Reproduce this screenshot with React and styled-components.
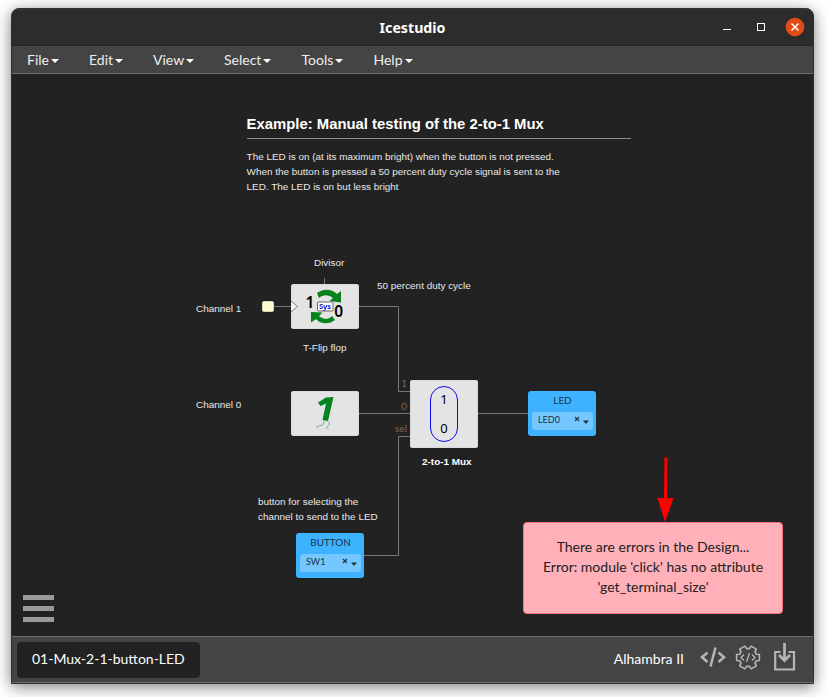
import React from 'react';
import styled, { createGlobalStyle } from 'styled-components';

const GlobalStyle = createGlobalStyle`
  * { box-sizing: border-box; }
  html, body { margin: 0; background: #fff; overflow: hidden; }
`;

const Desktop = styled.div`
  width: 827px;
  height: 697px;
  padding: 8px 13px 13px 11px;
  background: #fff;
  overflow: hidden;
  font-family: Lato, sans-serif;
`;

const Window = styled.div`
  display: flex;
  flex-direction: column;
  width: 803px;
  height: 676px;
  border: 1px solid #303030;
  border-radius: 8px 8px 0 0;
  background: #222;
  box-shadow: 0 3px 15px rgba(0, 0, 0, 0.52);
  overflow: hidden;
`;

const TitleBar = styled.header`
  display: grid;
  grid-template-columns: 1fr auto 1fr;
  align-items: center;
  flex: none;
  height: 37px;
  background: #2c2c2c;
  box-shadow: inset 0 1px #383838, inset 0 -1px #242424;
`;

const Title = styled.h1`
  grid-column: 2;
  margin: 0;
  color: #fff;
  font: 700 14.2px/20px 'Noto Sans', sans-serif;
`;

const WindowControls = styled.div`
  display: flex;
  align-items: center;
  justify-content: flex-end;
  padding: 0 8px 1px 0;

  svg { display: block; }
`;

const MenuBar = styled.nav`
  display: flex;
  flex: none;
  align-items: center;
  height: 28px;
  padding-left: 15px;
  border-bottom: 1px solid #6b6b6b;
  background: #444;
`;

const MenuItem = styled.div`
  display: flex;
  align-items: center;
  width: ${(p) => p.$width}px;
  color: #eee;
  font-size: 14px;
  line-height: 20px;
`;

const Caret = styled.span`
  margin: 2px 0 0 2px;
  border: 4.3px solid transparent;
  border-width: 4px 4.3px 0;
  border-top-color: #fff;
`;

const Canvas = styled.main`
  position: relative;
  display: flex;
  align-items: flex-end;
  justify-content: space-between;
  flex: 1;
  padding: 0 30px 22px 11px;
  background: #222;
  overflow: hidden;
`;

const Wires = styled.svg`
  position: absolute;
  inset: 0;
  width: 801px;
  height: 562px;
`;

const Note = styled.div`
  position: absolute;
  left: ${(p) => p.$x}px;
  top: ${(p) => p.$y}px;
  color: ${(p) => (p.$bold ? '#fff' : '#e8e8e8')};
  font: ${(p) => (p.$bold ? 700 : 400)} 9.93px/15px 'Liberation Sans', Arial, sans-serif;
  white-space: pre;
`;

const Intro = styled(Note)`
  width: 384px;

  h2 {
    margin: 0 0 10px;
    height: 25px;
    border-bottom: 1px solid #8f8f8f;
    color: #fff;
    font-size: 14.86px;
    line-height: 20px;
  }
`;

const Block = styled.div`
  position: absolute;
  left: ${(p) => p.$x}px;
  top: ${(p) => p.$y}px;
  width: 68px;
  height: ${(p) => p.$height || 45}px;
  border-radius: 3px;
  background: #e4e4e4;
  box-shadow: inset 0 0 0 1px #dadada;

  svg { display: block; }
`;

// Port names hang off the left edge of their block.
const PortNames = styled.div`
  position: absolute;
  right: 71px;
  top: -3px;
  display: grid;
  gap: 10.5px;
  color: #80685c;
  font-size: 10px;
  line-height: 12px;
  text-align: right;
`;

const PinBlock = styled(Block)`
  padding: 4px 3px 6px 4px;
  background: #3db2ff;
  box-shadow: none;
  color: #1d3343;
`;

const PinName = styled.div`
  height: 17px;
  font-size: 9.9px;
  line-height: 11px;
  text-align: center;
`;

const PinSelect = styled.div`
  display: flex;
  align-items: center;
  height: 18px;
  padding: 0 4.5px 3px 6px;
  border-radius: 3px;
  background: #75c8ff;
  font-size: 9px;

  span { flex: 1; }
`;

const ClockPort = styled.div`
  position: absolute;
  left: 250px;
  top: 227px;
  width: 12px;
  height: 11px;
  border: 1px solid #dcd8b4;
  border-radius: 2px;
  background: #fffbd0;
`;

const MenuToggle = styled.div`
  display: grid;
  gap: 6px;
  margin-bottom: -8px;

  span {
    width: 31px;
    height: 5px;
    background: #999;
  }
`;

const ErrorToast = styled.div`
  width: 260px;
  height: 92px;
  padding: 14px 10px;
  border: 1px solid #ff6f7a;
  border-radius: 4px;
  background: #ffb0b8;
  color: #222;
  font-size: 14px;
  line-height: 20px;
  text-align: center;
`;

const Footer = styled.footer`
  display: flex;
  flex: none;
  align-items: center;
  height: 47px;
  padding: 0 17px 0 5px;
  border-top: 1px solid #6b6b6b;
  border-bottom: 1px solid #6b6b6b;
  background: #444;
  color: #fff;
  font-size: 14px;
`;

const ProjectTab = styled.div`
  width: 183px;
  height: 36px;
  margin-right: auto;
  padding-left: 15px;
  border-radius: 4px;
  background: #222;
  line-height: 33px;
`;

const BoardName = styled.span`
  margin-right: 16px;
  padding-bottom: 2px;
`;

const Tools = styled.svg`
  display: block;
  width: 96px;
  height: 34px;
`;

const MENUS = [
  ['File', 62],
  ['Edit', 64],
  ['View', 71],
  ['Select', 77.5],
  ['Tools', 72],
  ['Help', 60],
];

// Outline of a six-toothed gear; one tooth per 60 degrees.
const GEAR_POINTS = Array.from({ length: 6 }, (_, i) =>
  [[-15, 11.8], [15, 11.8], [21, 9], [39, 9]].map(([offset, radius]) => {
    const angle = ((i * 60 + offset) * Math.PI) / 180;
    return `${(48 + radius * Math.cos(angle)).toFixed(2)},${(14.5 + radius * Math.sin(angle)).toFixed(2)}`;
  }).join(' ')
).join(' ');

function Pin({ x, y, name, value }) {
  return (
    <PinBlock $x={x} $y={y}>
      <PinName>{name}</PinName>
      <PinSelect>
        <span>{value}</span>
        <svg width="15" height="9" viewBox="0 0 15 9">
          <path d="M1 2l4 4M5 2l-4 4" stroke="#1d3343" strokeWidth="1.1" />
          <path d="M9 5.500h6l-3 3.500z" fill="#1d3343" />
        </svg>
      </PinSelect>
    </PinBlock>
  );
}

// A rotating pair of arrows around the system clock tag.
function FlipFlopArt() {
  return (
    <svg width="68" height="45" viewBox="0 0 68 45" fontFamily="Noto Sans, sans-serif">
      <path d="M0 17l6.5 5.5-6.5 5.5" fill="#f2f2f2" stroke="#666" strokeWidth=".8" />
      <g fill="#04831f">
        <path d="M26 9C31 5 40 4 46 10L50 7V18.500L38.500 17L42 14C38 10.500 32 10 28 14Z" />
        <path d="M44 36C39 40 30 41 25 35L20 38.500V28L31.500 28.500L28 32C32 35.500 37 36 41 32Z" />
      </g>
      <text x="14.500" y="24" fontSize="15.500" fontWeight="600">1</text>
      <text x="43.300" y="33" fontSize="15.500" fontWeight="600">0</text>
      <rect x="26.500" y="18" width="15.500" height="9" rx="1" fill="#fff" stroke="#444" strokeWidth=".8" />
      <text x="28" y="25" fontSize="7" fontWeight="700" fill="#1414e6" textLength="12" lengthAdjust="spacingAndGlyphs">Sys</text>
    </svg>
  );
}

function RunningOneArt() {
  return (
    <svg width="68" height="45" viewBox="0 0 68 45" fill="none">
      <path d="M35 6.500L42.500 6L37 30L31.500 29L35 12.500L29.500 15L27 11.500Z" fill="#04831f" />
      <path d="M34 29L31.500 34L25.500 35.500L27 37.500M36 29.500L39 33L35.500 36.500L37.500 39" stroke="#6cae77" strokeWidth=".9" />
    </svg>
  );
}

function MuxArt() {
  return (
    <svg width="68" height="68" viewBox="0 0 68 68" fontFamily="Noto Sans, sans-serif" fontSize="13" textAnchor="middle">
      <rect x="20.500" y="6.500" width="27" height="55" rx="13.500" fill="none" stroke="#0a0af0" strokeWidth="1" />
      <text x="34" y="24">1</text>
      <text x="34" y="53">0</text>
    </svg>
  );
}

export default function App() {
  return (
    <>
      <GlobalStyle />
      <Desktop>
        <Window>
          <TitleBar>
            <Title>Icestudio</Title>
            <WindowControls>
              <svg width="63" height="20" viewBox="0 0 63 20" fill="none" stroke="#fff">
                <path d="M1 12.500h8" />
                <rect x="35.500" y="6.500" width="7" height="7" />
              </svg>
              <svg width="20" height="20" viewBox="0 0 20 20">
                <circle cx="10" cy="10" r="9.300" fill="#e34a17" />
                <path d="M6.500 6.500l7 7M13.500 6.500l-7 7" stroke="#fff" strokeWidth="1.500" />
              </svg>
            </WindowControls>
          </TitleBar>
          <MenuBar>
            {MENUS.map(([label, width]) => (
              <MenuItem key={label} $width={width}>
                {label}
                <Caret />
              </MenuItem>
            ))}
          </MenuBar>
          <Canvas>
            <Wires viewBox="0 0 801 562" fill="none" stroke="#777">
              <path d="M261 232.500H280M312.500 204V211M346 232.500H386.500V317.500H399M346 339.500H399M352 481.500H386.500V362.500H399M465 339.500H517" />
            </Wires>
            <Intro $x={234.600} $y={40}>
              <h2>Example: Manual testing of the 2-to-1 Mux</h2>
              {'The LED is on (at its maximum bright) when the button is not pressed.\nWhen the button is pressed a 50 percent duty cycle signal is sent to the\nLED. The LED is on but less bright'}
            </Intro>
            <Note $x={302} $y={181}>Divisor</Note>
            <Note $x={365} $y={204}>50 percent duty cycle</Note>
            <Note $x={184} $y={227}>Channel 1</Note>
            <Note $x={291} $y={266}>T-Flip flop</Note>
            <Note $x={184} $y={323}>Channel 0</Note>
            <Note $x={410} $y={380} $bold>2-to-1 Mux</Note>
            <Note $x={246} $y={420}>{'button for selecting the\nchannel to send to the LED'}</Note>
            <ClockPort />
            <Block $x={279} $y={210}><FlipFlopArt /></Block>
            <Block $x={279} $y={317}><RunningOneArt /></Block>
            <Block $x={398} $y={306} $height={68}>
              <PortNames><span>1</span><span>0</span><span>sel</span></PortNames>
              <MuxArt />
            </Block>
            <Pin x={516} y={317} name="LED" value="LED0" />
            <Pin x={284} y={459} name="BUTTON" value="SW1" />
            <MenuToggle><span /><span /><span /></MenuToggle>
            <ErrorToast>
              There are errors in the Design...<br />
              Error: module 'click' has no attribute<br />
              'get_terminal_size'
            </ErrorToast>
            <Wires viewBox="0 0 801 562">
              <path d="M652.500 383.500h3L655 424h6.500L653 448L645.500 424h6.500z" fill="#f00" />
            </Wires>
          </Canvas>
          <Footer>
            <ProjectTab>01-Mux-2-1-button-LED</ProjectTab>
            <BoardName>Alhambra II</BoardName>
            <Tools viewBox="0 0 96 34" fill="none" stroke="#b5b5b5">
              <path d="M7.500 9.500L2 14.200L7.500 19M18.500 9.500L24 14.200L18.500 19M15.500 4.500L10.500 23.500" strokeWidth="2.500" />
              <polygon points={GEAR_POINTS} strokeWidth="1.600" strokeLinejoin="round" />
              <path d="M44 11.500l-3 3 3 3M52 11.500l3 3-3 3M49.500 10l-3 9" strokeWidth="1.300" />
              <path d="M80.500 9H75.200V26.500H94V9H88.500" strokeWidth="2.200" />
              <path d="M84.500 0V17M79 12L84.500 17.500L90 12" strokeWidth="2.700" />
            </Tools>
          </Footer>
        </Window>
      </Desktop>
    </>
  );
}
